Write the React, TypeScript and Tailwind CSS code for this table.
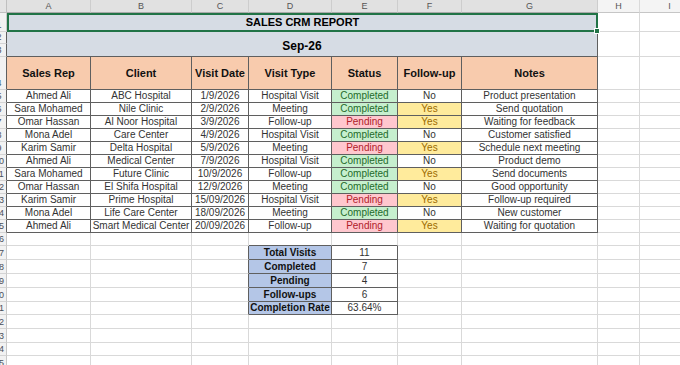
import React from 'react';

// column widths (row header, A..I)
const W = {
  rh: 'w-[7px]',
  A: 'w-[84px]',
  B: 'w-[101px]',
  C: 'w-[57px]',
  D: 'w-[83px]',
  E: 'w-[66px]',
  F: 'w-[64px]',
  G: 'w-[136px]',
  H: 'w-[42px]',
  I: 'w-[60px]',
};

const GRID = 'border-[#d9d9d9]';
const DARK = 'border-[#5f5f5f]';

interface CellProps {
  w: string;
  className?: string;
  children?: React.ReactNode;
}

const Cell: React.FC<CellProps> = ({ w, className = '', children }) => (
  <div
    className={`${w} shrink-0 h-full flex items-center justify-center border-r border-b whitespace-nowrap overflow-hidden leading-none ${className}`}
  >
    {children}
  </div>
);

const RowHead: React.FC<{ n: number; dark?: boolean; h?: string }> = ({ n, dark, h = 'h-full' }) => (
  <div
    className={`${W.rh} ${h} shrink-0 overflow-hidden bg-[#f2f2f2] border-r border-b border-b-[#d4d4d4] flex items-end pb-[1px] ${
      dark ? 'border-r-[#5f5f5f]' : 'border-r-[#c8c8c8]'
    }`}
  >
    <div className="w-[26px] -ml-[14px] shrink-0 text-center text-[9px] leading-none text-[#4a4f5a]">{n}</div>
  </div>
);

const EmptyTail: React.FC = () => (
  <>
    <Cell w={W.H} className={GRID} />
    <Cell w={W.I} className={GRID} />
  </>
);

type Visit = [string, string, string, string, 'Completed' | 'Pending', 'Yes' | 'No', string];

const visits: Visit[] = [
  ['Ahmed Ali', 'ABC Hospital', '1/9/2026', 'Hospital Visit', 'Completed', 'No', 'Product presentation'],
  ['Sara Mohamed', 'Nile Clinic', '2/9/2026', 'Meeting', 'Completed', 'Yes', 'Send quotation'],
  ['Omar Hassan', 'Al Noor Hospital', '3/9/2026', 'Follow-up', 'Pending', 'Yes', 'Waiting for feedback'],
  ['Mona Adel', 'Care Center', '4/9/2026', 'Hospital Visit', 'Completed', 'No', 'Customer satisfied'],
  ['Karim Samir', 'Delta Hospital', '5/9/2026', 'Meeting', 'Pending', 'Yes', 'Schedule next meeting'],
  ['Ahmed Ali', 'Medical Center', '7/9/2026', 'Hospital Visit', 'Completed', 'No', 'Product demo'],
  ['Sara Mohamed', 'Future Clinic', '10/9/2026', 'Follow-up', 'Completed', 'Yes', 'Send documents'],
  ['Omar Hassan', 'El Shifa Hospital', '12/9/2026', 'Meeting', 'Completed', 'No', 'Good opportunity'],
  ['Karim Samir', 'Prime Hospital', '15/09/2026', 'Hospital Visit', 'Pending', 'Yes', 'Follow-up required'],
  ['Mona Adel', 'Life Care Center', '18/09/2026', 'Meeting', 'Completed', 'No', 'New customer'],
  ['Ahmed Ali', 'Smart Medical Center', '20/09/2026', 'Follow-up', 'Pending', 'Yes', 'Waiting for quotation'],
];

const summary: [string, string][] = [
  ['Total Visits', '11'],
  ['Completed', '7'],
  ['Pending', '4'],
  ['Follow-ups', '6'],
  ['Completion Rate', '63.64%'],
];

// heights of the blank rows 16..25
const lowerHeights = ['h-[13px]', 'h-[14px]', 'h-[14px]', 'h-[14px]', 'h-[14px]', 'h-[13px]', 'h-[14px]', 'h-[14px]', 'h-[13px]', 'h-[14px]'];

const App: React.FC = () => {
  return (
    <div className="w-[680px] h-[365px] overflow-hidden bg-white text-[10px] text-[#333] font-['Liberation_Sans',Arial,sans-serif]">
      {/* column letters */}
      <div className="flex h-[13px] text-[9px] text-[#555]">
        <div className={`${W.rh} shrink-0 h-full bg-[#e4e4e4] border-r border-b border-[#c0c0c0]`} />
        {(['A', 'B', 'C', 'D', 'E', 'F', 'G'] as const).map((c) => (
          <Cell key={c} w={W[c]} className="bg-[#e1e1e1] border-r-[#cdcdcd] border-b-[#a9a9a9]">
            {c}
          </Cell>
        ))}
        <Cell w={W.H} className="bg-[#f4f4f4] border-r-[#dadada] border-b-[#c6c6c6]">H</Cell>
        <Cell w={W.I} className="bg-[#f4f4f4] border-r-[#dadada] border-b-[#c6c6c6]">I</Cell>
      </div>

      {/* row 1: title, selected */}
      <div className="flex h-[19px]">
        <RowHead n={1} />
        <div className="relative w-[591px] shrink-0 h-full border-2 border-[#217346] bg-[#d6dce4] flex items-center justify-center">
          <span className="text-[11px] font-bold text-black leading-none">SALES CRM REPORT</span>
          <div className="absolute -right-[4px] -bottom-[4px] w-[6px] h-[6px] bg-[#217346] border border-white" />
        </div>
        <EmptyTail />
      </div>

      {/* rows 2-3: month */}
      <div className="flex h-[25px]">
        <div className="flex flex-col h-full">
          <RowHead n={2} dark h="h-[12px]" />
          <RowHead n={3} dark h="h-[13px]" />
        </div>
        <div className={`w-[591px] shrink-0 h-full bg-[#d6dce4] border-r border-b ${DARK} flex items-end justify-center pb-[4px]`}>
          <span className="text-[12px] font-bold text-black leading-none">Sep-26</span>
        </div>
        <EmptyTail />
      </div>

      {/* row 4: table header */}
      <div className="flex h-[33px]">
        <RowHead n={4} dark />
        {[
          [W.A, 'Sales Rep'],
          [W.B, 'Client'],
          [W.C, 'Visit Date'],
          [W.D, 'Visit Type'],
          [W.E, 'Status'],
          [W.F, 'Follow-up'],
          [W.G, 'Notes'],
        ].map(([w, label]) => (
          <Cell key={label} w={w} className={`bg-[#f8cbad] ${DARK} text-[11px] font-bold text-[#111]`}>
            {label}
          </Cell>
        ))}
        <EmptyTail />
      </div>

      {/* rows 5-15: visits */}
      {visits.map((v, i) => (
        <div key={i} className="flex h-[13px]">
          <RowHead n={i + 5} dark />
          <Cell w={W.A} className={DARK}>{v[0]}</Cell>
          <Cell w={W.B} className={DARK}>{v[1]}</Cell>
          <Cell w={W.C} className={DARK}>{v[2]}</Cell>
          <Cell w={W.D} className={DARK}>{v[3]}</Cell>
          <Cell
            w={W.E}
            className={`${DARK} ${v[4] === 'Completed' ? 'bg-[#c6efce] text-[#1e6b2a]' : 'bg-[#ffc7ce] text-[#b01c2a]'}`}
          >
            {v[4]}
          </Cell>
          <Cell w={W.F} className={`${DARK} ${v[5] === 'Yes' ? 'bg-[#ffeb9c] text-[#9c6a00]' : ''}`}>
            {v[5]}
          </Cell>
          <Cell w={W.G} className={DARK}>{v[6]}</Cell>
          <EmptyTail />
        </div>
      ))}

      {/* rows 16-25: blank rows with the summary block */}
      {lowerHeights.map((h, i) => {
        const row = i + 16;
        const s = summary[row - 17];
        return (
          <div key={row} className={`flex ${h}`}>
            <RowHead n={row} />
            <Cell w={W.A} className={GRID} />
            <Cell w={W.B} className={GRID} />
            <Cell w={W.C} className={`border-b-[#d9d9d9] ${s ? 'border-r-[#5f5f5f]' : 'border-r-[#d9d9d9]'}`} />
            {s ? (
              <>
                <Cell w={W.D} className={`${DARK} bg-[#b4c6e7] font-bold text-[#111]`}>{s[0]}</Cell>
                <Cell w={W.E} className={DARK}>{s[1]}</Cell>
              </>
            ) : (
              <>
                <Cell w={W.D} className={`border-r-[#d9d9d9] ${row === 16 ? 'border-b-[#5f5f5f]' : 'border-b-[#d9d9d9]'}`} />
                <Cell w={W.E} className={`border-r-[#d9d9d9] ${row === 16 ? 'border-b-[#5f5f5f]' : 'border-b-[#d9d9d9]'}`} />
              </>
            )}
            <Cell w={W.F} className={GRID} />
            <Cell w={W.G} className={GRID} />
            <EmptyTail />
          </div>
        );
      })}
    </div>
  );
};

export default App;
